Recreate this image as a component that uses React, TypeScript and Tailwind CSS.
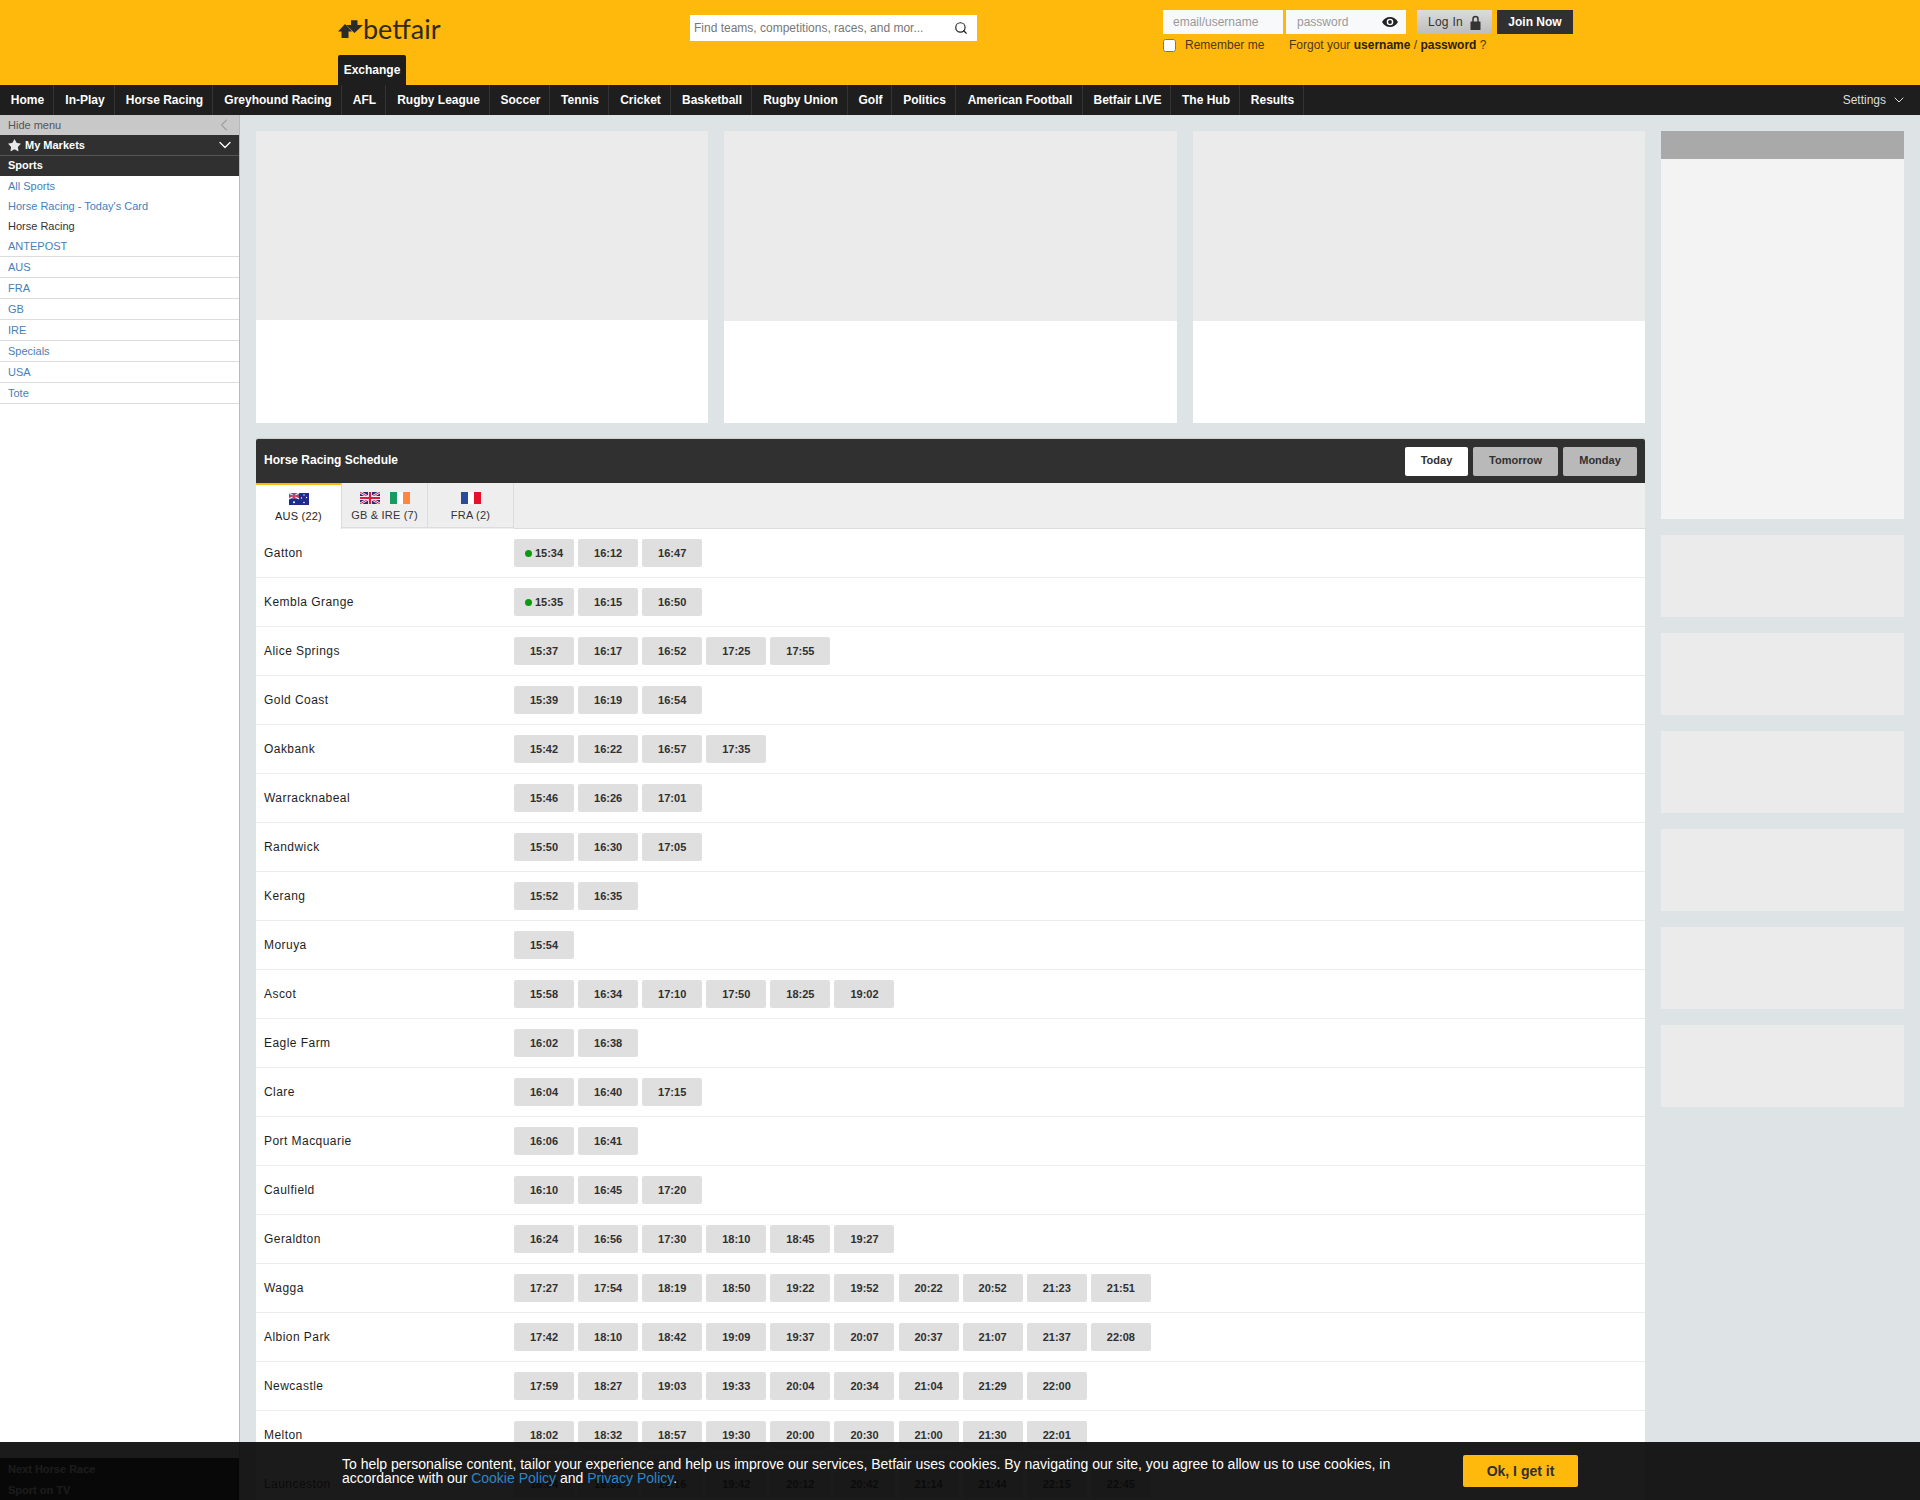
import React from 'react';
import { ChevronDown, ChevronLeft, Search, Star } from 'lucide-react';

const NAV_ITEMS = [
  { label: 'Home', w: 'w-[54px]' },
  { label: 'In-Play', w: 'w-[61px]' },
  { label: 'Horse Racing', w: 'w-[98px]' },
  { label: 'Greyhound Racing', w: 'w-[129px]' },
  { label: 'AFL', w: 'w-[44px]' },
  { label: 'Rugby League', w: 'w-[104px]' },
  { label: 'Soccer', w: 'w-[60px]' },
  { label: 'Tennis', w: 'w-[59px]' },
  { label: 'Cricket', w: 'w-[62px]' },
  { label: 'Basketball', w: 'w-[81px]' },
  { label: 'Rugby Union', w: 'w-[96px]' },
  { label: 'Golf', w: 'w-[44px]' },
  { label: 'Politics', w: 'w-[64px]' },
  { label: 'American Football', w: 'w-[127px]' },
  { label: 'Betfair LIVE', w: 'w-[88px]' },
  { label: 'The Hub', w: 'w-[69px]' },
  { label: 'Results', w: 'w-[64px]' },
];

const SIDE_PLAIN = [
  { label: 'All Sports', active: false },
  { label: "Horse Racing - Today's Card", active: false },
  { label: 'Horse Racing', active: true },
];
const SIDE_BORDERED = ['ANTEPOST', 'AUS', 'FRA', 'GB', 'IRE', 'Specials', 'USA', 'Tote'];

const SCHEDULE: { name: string; times: string[]; live?: boolean }[] = [
  { name: 'Gatton', times: ['15:34', '16:12', '16:47'], live: true },
  { name: 'Kembla Grange', times: ['15:35', '16:15', '16:50'], live: true },
  { name: 'Alice Springs', times: ['15:37', '16:17', '16:52', '17:25', '17:55'] },
  { name: 'Gold Coast', times: ['15:39', '16:19', '16:54'] },
  { name: 'Oakbank', times: ['15:42', '16:22', '16:57', '17:35'] },
  { name: 'Warracknabeal', times: ['15:46', '16:26', '17:01'] },
  { name: 'Randwick', times: ['15:50', '16:30', '17:05'] },
  { name: 'Kerang', times: ['15:52', '16:35'] },
  { name: 'Moruya', times: ['15:54'] },
  { name: 'Ascot', times: ['15:58', '16:34', '17:10', '17:50', '18:25', '19:02'] },
  { name: 'Eagle Farm', times: ['16:02', '16:38'] },
  { name: 'Clare', times: ['16:04', '16:40', '17:15'] },
  { name: 'Port Macquarie', times: ['16:06', '16:41'] },
  { name: 'Caulfield', times: ['16:10', '16:45', '17:20'] },
  { name: 'Geraldton', times: ['16:24', '16:56', '17:30', '18:10', '18:45', '19:27'] },
  { name: 'Wagga', times: ['17:27', '17:54', '18:19', '18:50', '19:22', '19:52', '20:22', '20:52', '21:23', '21:51'] },
  { name: 'Albion Park', times: ['17:42', '18:10', '18:42', '19:09', '19:37', '20:07', '20:37', '21:07', '21:37', '22:08'] },
  { name: 'Newcastle', times: ['17:59', '18:27', '19:03', '19:33', '20:04', '20:34', '21:04', '21:29', '22:00'] },
  { name: 'Melton', times: ['18:02', '18:32', '18:57', '19:30', '20:00', '20:30', '21:00', '21:30', '22:01'] },
  { name: 'Launceston', times: ['18:04', '18:31', '19:16', '19:42', '20:12', '20:42', '21:14', '21:44', '22:15', '22:45'] },
];

const Logo = () => (
  <div className="flex items-center h-[28px]">
    <svg width="25" height="19" viewBox="0 0 25 19" className="mt-[3px]">
      <path d="M7 4 14 11.500H10.500V18H3.500v-6.500H0z" fill="#2b2b2b" />
      <path d="M13 .3h6.500v4.700H25l-8.500 8-8.500-8h5z" fill="#2b2b2b" />
    </svg>
    <span className="text-[27px] leading-none text-[#2f2a1c] font-['Lato',sans-serif]">betfair</span>
  </div>
);

const EyeIcon = () => (
  <svg width="16" height="12" viewBox="0 0 16 12">
    <path d="M0 6c2-3.400 4.800-5 8-5s6 1.600 8 5c-2 3.400-4.800 5-8 5S2 9.400 0 6z" fill="#222" />
    <circle cx="8" cy="6" r="3.300" fill="#fff" />
    <circle cx="8" cy="6" r="1.900" fill="#222" />
  </svg>
);

const LockIcon = () => (
  <svg width="11" height="15" viewBox="0 0 11 15">
    <path d="M3 7V4a2.500 2.500 0 0 1 5 0v3" fill="none" stroke="#333" strokeWidth="1.500" />
    <rect x="0.500" y="6.500" width="10" height="8.500" rx="0.500" fill="#333" />
  </svg>
);

const FlagAU = () => (
  <svg width="20" height="12" viewBox="0 0 20 12">
    <rect width="20" height="12" fill="#1f2a8c" />
    <rect width="10" height="6" fill="#5a5fa8" />
    <path d="M0 0l10 6M10 0 0 6" stroke="#e8e8f0" strokeWidth="1.2" />
    <path d="M5 0v6M0 3h10" stroke="#d8304a" strokeWidth="1.4" />
    <circle cx="5" cy="9.2" r="1" fill="#fff" />
    <circle cx="15" cy="2" r=".7" fill="#fff" />
    <circle cx="12.5" cy="5" r=".7" fill="#fff" />
    <circle cx="17.5" cy="4.5" r=".7" fill="#fff" />
    <circle cx="15" cy="9.5" r=".8" fill="#fff" />
  </svg>
);

const FlagGB = () => (
  <svg width="20" height="12" viewBox="0 0 20 12">
    <rect width="20" height="12" fill="#2b2a7c" />
    <path d="M0 0l20 12M20 0 0 12" stroke="#f2e8f0" strokeWidth="2.4" />
    <path d="M0 0l20 12M20 0 0 12" stroke="#c8285a" strokeWidth="1" />
    <path d="M10 0v12M0 6h20" stroke="#f2e8f0" strokeWidth="4" />
    <path d="M10 0v12M0 6h20" stroke="#d02040" strokeWidth="2.2" />
  </svg>
);

const FlagTri = ({ a, b, c }: { a: string; b: string; c: string }) => (
  <svg width="20" height="12" viewBox="0 0 20 12">
    <rect width="7" height="12" fill={a} />
    <rect x="7" width="6" height="12" fill={b} />
    <rect x="13" width="7" height="12" fill={c} />
  </svg>
);

const AdCard = ({ tall }: { tall?: boolean }) => (
  <div className="flex-1 h-[292px] bg-white">
    <div className={tall ? 'h-[190px] bg-[#ebebeb]' : 'h-[189px] bg-[#ebebeb]'} />
  </div>
);

const Tab = ({ active, label, children }: { active?: boolean; label: string; children: React.ReactNode }) => (
  <div
    className={
      active
        ? 'w-[86px] h-[46px] border-t-2 border-t-[#ffb80c] border-r border-r-[#dcdcdc] bg-white flex flex-col items-center pt-[8px]'
        : 'w-[86px] h-[45px] border-r border-r-[#dcdcdc] border-b border-b-[#dcdcdc] flex flex-col items-center pt-[9px]'
    }
  >
    <div className="flex gap-[10px] h-[12px] items-center">{children}</div>
    <div className={active ? 'mt-[4px] text-[11px] leading-[14px] tracking-[0.2px] text-[#1e1e1e]' : 'mt-[4px] text-[11px] leading-[14px] tracking-[0.2px] text-[#333]'}>{label}</div>
  </div>
);

const RaceRow = ({ name, times, live }: { name: string; times: string[]; live?: boolean }) => (
  <div className="h-[49px] flex items-start border-b border-[#ececec] shrink-0">
    <div className="w-[258px] pl-[8px] pt-[17px] text-[12px] leading-[14px] tracking-[0.45px] text-[#1e1e1e]">{name}</div>
    <div className="flex gap-[4.1px] pt-[10px]">
      {times.map((t, i) => (
        <div key={t} className="w-[60px] h-[28px] rounded-[2px] bg-[#dfdfdf] flex items-center justify-center text-[11px] font-bold text-[#303030]">
          {live && i === 0 && <span className="w-[7px] h-[7px] rounded-full bg-[#0d9a10] mr-[3px]" />}
          {t}
        </div>
      ))}
    </div>
  </div>
);

export default function App() {
  return (
    <div className="relative h-screen overflow-hidden bg-[#dee4e5] font-['Liberation_Sans',Arial,sans-serif]">
      {/* header */}
      <header className="h-[85px] bg-[#ffb80c] flex">
        <div className="w-[338px] shrink-0" />
        <div className="w-[352px] shrink-0 flex flex-col">
          <div className="mt-[14px]"><Logo /></div>
          <div className="mt-[13px] w-[68px] h-[30px] rounded-t-[2px] bg-[#1e1e1e] text-white text-[12px] font-bold flex items-center justify-center">Exchange</div>
        </div>
        <div className="w-[473px] shrink-0 pt-[15px]">
          <div className="w-[287px] h-[26px] bg-white flex items-center justify-between pl-[4px] pr-[9px]">
            <span className="text-[12px] text-[#777]">Find teams, competitions, races, and mor...</span>
            <Search size={14} strokeWidth={2} className="text-[#222]" />
          </div>
        </div>
        <div className="pt-[10px] w-[420px]">
          <div className="flex">
            <div className="w-[120px] h-[24px] bg-[#f8f9fb] pl-[10px] flex items-center text-[12px] text-[#999]">email/username</div>
            <div className="ml-[3px] w-[120px] h-[24px] bg-[#f8f9fb] pl-[11px] pr-[8px] flex items-center justify-between text-[12px] text-[#999]">
              password
              <EyeIcon />
            </div>
            <div className="ml-[11px] w-[75px] h-[24px] rounded-[1px] bg-gradient-to-b from-[#dcdcdc] to-[#bdbdbd] flex items-center justify-center gap-[7px] text-[12px] text-[#333]">
              <span className="tracking-[0.3px]">Log In</span>
              <LockIcon />
            </div>
            <div className="ml-[5px] w-[76px] h-[24px] bg-[#303030] flex items-center justify-center text-[12px] font-bold text-white">Join Now</div>
          </div>
          <div className="flex items-center mt-[2px] text-[12px] text-[#4a3a10]">
            <input type="checkbox" readOnly className="w-[13px] h-[13px] bg-white" />
            <span className="ml-[3px] pl-[6px] w-[110px]">Remember me</span>
            <span>Forgot your <b className="text-[#2a2208]">username</b> / <b className="text-[#2a2208]">password</b> ?</span>
          </div>
        </div>
      </header>

      {/* main nav */}
      <nav className="h-[30px] bg-[#1e1e1e] flex items-stretch">
        {NAV_ITEMS.map(item => (
          <div key={item.label} className={`${item.w} shrink-0 border-r border-[#333] pl-[2px] flex items-center justify-center text-[12px] font-bold text-white`}>
            {item.label}
          </div>
        ))}
        <div className="ml-auto flex items-center pr-[13px] text-[12px] text-[#ddd]">
          Settings
          <ChevronDown size={16} strokeWidth={1.5} className="ml-[5px]" />
        </div>
      </nav>

      <div className="flex items-stretch h-[1385px]">
        {/* left menu */}
        <aside className="w-[240px] shrink-0 bg-white border-r border-[#b9b9b9] flex flex-col text-[11px]">
          <div className="h-[20px] bg-[#c8c8c8] flex items-center justify-between pl-[8px] pr-[5px] text-[#555]">
            Hide menu
            <ChevronLeft size={20} strokeWidth={1.3} className="text-[#a0a0a0]" />
          </div>
          <div className="h-[21px] bg-[#303030] border-b border-[#555] flex items-center justify-between pl-[7px] pr-[4px] text-white font-bold">
            <span className="flex items-center gap-[3px]">
              <Star size={15} fill="#e8e8e8" strokeWidth={0} />
              My Markets
            </span>
            <ChevronDown size={20} strokeWidth={1.5} />
          </div>
          <div className="h-[20px] bg-[#303030] flex items-center pl-[8px] pb-[1px] text-white font-bold">Sports</div>
          {SIDE_PLAIN.map(item => (
            <div key={item.label} className={item.active ? 'h-[20px] flex items-center pl-[8px] text-[#333]' : 'h-[20px] flex items-center pl-[8px] text-[#4680b8]'}>
              {item.label}
            </div>
          ))}
          {SIDE_BORDERED.map(label => (
            <div key={label} className="h-[21px] shrink-0 flex items-center pl-[8px] text-[#4680b8] border-b border-[#dcdcdc]">{label}</div>
          ))}
          <div className="mt-auto h-[42px] bg-black pl-[8px] pt-[1px] text-white font-bold leading-[21px]">
            <div>Next Horse Race</div>
            <div>Sport on TV</div>
          </div>
        </aside>

        {/* centre */}
        <main className="w-[1389px] ml-[16px] shrink-0 pt-[16px] overflow-hidden">
          <div className="flex gap-[16px]">
            <AdCard />
            <AdCard tall />
            <AdCard tall />
          </div>
          <section className="mt-[16px] bg-white shadow-[0_0_2px_rgba(0,0,0,0.35)] rounded-t-[2px]">
            <div className="h-[44px] bg-[#303030] rounded-t-[2px] flex items-center justify-between pl-[8px] pr-[8px]">
              <span className="text-[12px] font-bold text-white pb-[2px]">Horse Racing Schedule</span>
              <div className="flex gap-[5px] text-[11px] font-bold">
                <div className="w-[63px] h-[29px] rounded-[2px] bg-white text-[#303030] flex items-center justify-center pb-[1px]">Today</div>
                <div className="w-[85px] h-[29px] rounded-[2px] bg-[#b9b9b9] text-[#303030] flex items-center justify-center pb-[1px]">Tomorrow</div>
                <div className="w-[74px] h-[29px] rounded-[2px] bg-[#b9b9b9] text-[#303030] flex items-center justify-center pb-[1px]">Monday</div>
              </div>
            </div>
            <div className="h-[46px] bg-[#eeeeee] flex">
              <Tab active label="AUS (22)"><FlagAU /></Tab>
              <Tab label="GB & IRE (7)"><FlagGB /><FlagTri a="#169b62" b="#ffffff" c="#ff883e" /></Tab>
              <Tab label="FRA (2)"><FlagTri a="#2a4a9c" b="#ffffff" c="#e8112d" /></Tab>
              <div className="flex-1 border-b border-[#dcdcdc]" />
            </div>
            {SCHEDULE.map(row => (
              <RaceRow key={row.name} {...row} />
            ))}
          </section>
        </main>

        {/* right column */}
        <aside className="w-[243px] ml-[16px] shrink-0 pt-[16px] flex flex-col">
          <div className="h-[388px] bg-[#f3f3f3]">
            <div className="h-[28px] bg-[#a9a9a9]" />
          </div>
          {[0, 1, 2, 3, 4, 5].map(i => (
            <div key={i} className="mt-[16px] h-[82px] bg-[#ebebeb]" />
          ))}
        </aside>
      </div>

      {/* cookie banner */}
      <div className="absolute left-0 right-0 bottom-0 h-[58px] bg-[#090909]/[0.925] flex items-start">
        <div className="ml-[342px] w-[1060px] pt-[15px] text-[14px] leading-[14px] text-white">
          To help personalise content, tailor your experience and help us improve our services, Betfair uses cookies. By navigating our site, you agree to allow us to use cookies, in accordance with our{' '}
          <span className="text-[#2d86c8]">Cookie Policy</span> and <span className="text-[#2d86c8]">Privacy Policy</span>.
        </div>
        <div className="ml-[61px] mt-[13px] w-[115px] h-[32px] rounded-[2px] bg-[#ffb80c] flex items-center justify-center text-[14px] font-bold text-[#303030]">Ok, I get it</div>
      </div>
    </div>
  );
}
